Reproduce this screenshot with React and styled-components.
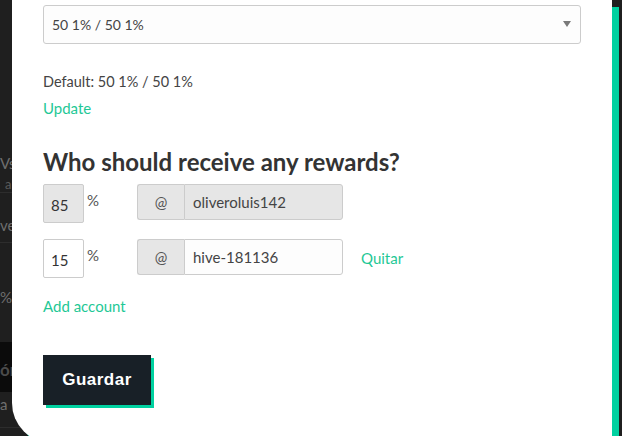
import React from "react";
import styled, { createGlobalStyle } from "styled-components";

const GREEN = "#00d1a0";
const LINK = "#1fc896";

function App() {
    return (
        <>
            <GlobalStyle />
            <Stage>
                <Backdrop>
                    <BackRow $height={43} $pad={5}>
                        <BackText>Vs</BackText>
                        <BackSmall>a</BackSmall>
                    </BackRow>
                    <BackRow $height={50} $pad={24}>
                        <BackText>ve</BackText>
                    </BackRow>
                    <BackRow $height={99} $pad={46} $plain>
                        <BackText>%</BackText>
                    </BackRow>
                    <BackBanner>
                        <span>ón</span>
                    </BackBanner>
                    <BackRow $height={36} $pad={4}>
                        <BackText>a</BackText>
                    </BackRow>
                </Backdrop>

                <Modal>
                    <SelectBox>
                        <span>50 1% / 50 1%</span>
                        <Caret />
                    </SelectBox>

                    <Hint>Default: 50 1% / 50 1%</Hint>
                    <TextLink>Update</TextLink>

                    <Heading>Who should receive any rewards?</Heading>

                    <Beneficiaries>
                        <BeneficiaryRow>
                            <PctCell>
                                <PctInput $readOnly>85</PctInput>
                                <PctSign>%</PctSign>
                            </PctCell>
                            <AccountGroup>
                                <AtAddon>@</AtAddon>
                                <AccountInput $readOnly>oliveroluis142</AccountInput>
                            </AccountGroup>
                        </BeneficiaryRow>
                        <BeneficiaryRow>
                            <PctCell>
                                <PctInput>15</PctInput>
                                <PctSign>%</PctSign>
                            </PctCell>
                            <AccountGroup>
                                <AtAddon>@</AtAddon>
                                <AccountInput>hive-181136</AccountInput>
                            </AccountGroup>
                            <RemoveLink>Quitar</RemoveLink>
                        </BeneficiaryRow>
                    </Beneficiaries>

                    <AddLink>Add account</AddLink>

                    <SaveButton>Guardar</SaveButton>
                </Modal>
            </Stage>
        </>
    );
}

export default App;

const GlobalStyle = createGlobalStyle`
    html, body {
        margin: 0;
        padding: 0;
        background: #1f1f1f;
        overflow: hidden;
    }
    body {
        font-family: Lato, "Open Sans", sans-serif;
        -webkit-font-smoothing: antialiased;
    }
`;

const Stage = styled.div`
    position: relative;
    width: 622px;
    height: 436px;
    overflow: hidden;
    background: #1f1f1f;
`;

const Backdrop = styled.div`
    display: flex;
    flex-direction: column;
    padding-top: 150px;
    width: 60px;
    font-family: Lato, sans-serif;
`;

const BackRow = styled.div`
    height: ${(p) => p.$height}px;
    padding-top: ${(p) => p.$pad}px;
    box-sizing: border-box;
    border-bottom: ${(p) => (p.$plain ? "none" : "1px solid #2d2d2d")};
    display: flex;
    flex-direction: column;
`;

const BackText = styled.span`
    font-size: 15px;
    line-height: 16px;
    color: #6e6e6e;
`;

const BackSmall = styled.span`
    margin: 6px 0 0 5px;
    font-size: 13px;
    line-height: 14px;
    color: #5a5a5a;
`;

const BackBanner = styled.div`
    height: 50px;
    background: #0b0b0b;
    display: flex;
    align-items: center;
    padding-top: 4px;
    box-sizing: border-box;

    span {
        font-size: 17px;
        font-weight: 700;
        color: #4a4a4a;
    }
`;

const Modal = styled.div`
    position: absolute;
    left: 12px;
    top: 0;
    width: 600px;
    height: 443px;
    box-sizing: border-box;
    padding: 5px 31px 0;
    background: #fff;
    border-bottom-left-radius: 40px;
    box-shadow: 7px 7px 0 ${GREEN};
    display: flex;
    flex-direction: column;
    align-items: flex-start;
    color: #333;
`;

const SelectBox = styled.div`
    align-self: stretch;
    height: 39px;
    box-sizing: border-box;
    border: 1px solid #cccccc;
    border-radius: 3px;
    background: #fdfdfd;
    display: flex;
    align-items: center;
    justify-content: space-between;
    padding: 0 9px 0 8px;
    font-size: 14px;
    color: #444;
`;

const Caret = styled.span`
    width: 0;
    height: 0;
    border-left: 4px solid transparent;
    border-right: 4px solid transparent;
    border-top: 6px solid #7a7a7a;
    margin-top: -2px;
`;

const Hint = styled.div`
    margin-top: 28px;
    font-size: 14.5px;
    line-height: 20px;
    color: #444;
`;

const TextLink = styled.a`
    margin-top: 6px;
    font-size: 15px;
    line-height: 20px;
    color: ${LINK};
    cursor: pointer;
`;

const Heading = styled.h2`
    margin: 29px 0 0;
    font-size: 24px;
    line-height: 30px;
    font-weight: 700;
    color: #333;
`;

const Beneficiaries = styled.div`
    margin-top: 7px;
    display: flex;
    flex-direction: column;
    gap: 16px;
`;

const BeneficiaryRow = styled.div`
    display: flex;
    align-items: flex-start;
`;

const PctCell = styled.div`
    width: 94px;
    display: flex;
    align-items: flex-start;
`;

const PctInput = styled.div`
    width: 41px;
    height: 39px;
    box-sizing: border-box;
    border: 1px solid #cccccc;
    border-radius: 2px;
    background: ${(p) => (p.$readOnly ? "#e6e6e6" : "#fff")};
    padding: 2px 0 0 7px;
    display: flex;
    align-items: center;
    font-size: 15px;
    color: #333;
`;

const PctSign = styled.span`
    margin: 6px 0 0 3px;
    font-size: 15px;
    line-height: 20px;
    color: #555;
`;

const AccountGroup = styled.div`
    display: flex;
    height: 36px;
`;

const AtAddon = styled.div`
    width: 47px;
    box-sizing: border-box;
    border: 1px solid #cccccc;
    border-right: none;
    border-radius: 3px 0 0 3px;
    background: #e6e6e6;
    display: flex;
    align-items: center;
    justify-content: center;
    font-size: 15px;
    color: #555;
`;

const AccountInput = styled.div`
    width: 159px;
    box-sizing: border-box;
    border: 1px solid #cccccc;
    border-radius: 0 3px 3px 0;
    background: ${(p) => (p.$readOnly ? "#e6e6e6" : "#fdfdfd")};
    padding-left: 8px;
    display: flex;
    align-items: center;
    font-size: 15px;
    color: #444;
`;

const RemoveLink = styled.a`
    align-self: center;
    margin: -2px 0 0 18px;
    font-size: 15px;
    line-height: 20px;
    color: ${LINK};
    cursor: pointer;
`;

const AddLink = styled(TextLink)`
    margin-top: 18px;
`;

const SaveButton = styled.button`
    margin-top: 39px;
    width: 108px;
    height: 50px;
    border: none;
    border-radius: 0;
    background: #182027;
    color: #fff;
    font-family: "Liberation Sans", Arial, sans-serif;
    font-size: 17px;
    font-weight: 700;
    letter-spacing: 0.5px;
    box-shadow: 3px 3px 0 ${GREEN};
    cursor: pointer;
`;
